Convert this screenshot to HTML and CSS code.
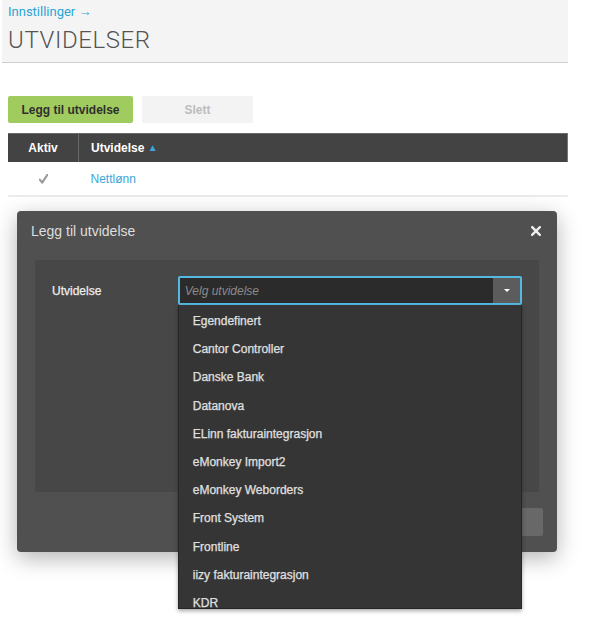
FILE: index.html
```html
<!DOCTYPE html>
<html lang="no">
<head>
  <meta charset="UTF-8">
  <meta name="viewport" content="width=device-width, initial-scale=1.0">
  <title>Utvidelser</title>
  <link rel="stylesheet" href="styles.css">
</head>
<body>

  <div class="page">
    <div class="page-header">
      <a class="crumb" href="#">Innstillinger &rarr;</a>
      <h1>UTVIDELSER</h1>
    </div>

    <div class="content">
      <div class="toolbar">
        <button class="btn btn-green">Legg til utvidelse</button>
        <button class="btn btn-disabled">Slett</button>
      </div>

      <table class="grid">
        <thead>
          <tr>
            <th class="col-active">Aktiv</th>
            <th class="col-name">Utvidelse <span class="sort">&#9650;</span></th>
          </tr>
        </thead>
        <tbody>
          <tr>
            <td class="col-active">
              <svg width="9" height="10" viewBox="0 0 9 10"><path d="M0.8 5.6 L3.2 8.6 L8.2 1" fill="none" stroke="#9a9a9a" stroke-width="2.2" stroke-linecap="round" stroke-linejoin="round"/></svg>
            </td>
            <td class="col-name"><a href="#">Nettlønn</a></td>
          </tr>
        </tbody>
      </table>
    </div>
  </div>

  <!-- dialog -->
  <div class="modal">
    <div class="modal-header">
      <span class="modal-title">Legg til utvidelse</span>
      <svg class="close" width="10" height="10" viewBox="0 0 10 10"><path d="M1.2 1.2 L8.8 8.8 M8.8 1.2 L1.2 8.8" stroke="#eeeeee" stroke-width="2.4" stroke-linecap="square"/></svg>
    </div>
    <div class="modal-body">
      <div class="panel">
        <div class="field">
          <label class="field-label">Utvidelse</label>
          <div class="select">
            <span class="placeholder">Velg utvidelse</span>
            <span class="select-arrow"><span class="caret"></span></span>
            <ul class="options">
              <li>Egendefinert</li>
              <li>Cantor Controller</li>
              <li>Danske Bank</li>
              <li>Datanova</li>
              <li>ELinn fakturaintegrasjon</li>
              <li>eMonkey Import2</li>
              <li>eMonkey Weborders</li>
              <li>Front System</li>
              <li>Frontline</li>
              <li>iizy fakturaintegrasjon</li>
              <li>KDR</li>
            </ul>
          </div>
        </div>
      </div>
    </div>
    <div class="modal-footer">
      <button class="btn btn-dark">Lagre</button>
    </div>
  </div>

</body>
</html>
```

FILE: styles.css
```css
body {
  margin: 0;
  font-family: "Liberation Sans", Arial, sans-serif;
  font-size: 12px;
  color: #333;
  background: #fff;
}
.page {
  width: 568px;
}
.page-header {
  margin-left: 2px;
  padding: 4px 6px 8px;
  background: #f4f4f4;
  border-bottom: 1px solid #cfcfcf;
}
.crumb {
  display: block;
  font-family: Roboto, sans-serif;
  font-size: 13px;
  line-height: 16px;
  color: #2aa4d5;
  text-decoration: none;
}
h1 {
  margin: 6px 0 0;
  font-family: Roboto, sans-serif;
  font-weight: 300;
  font-size: 24px;
  line-height: 28px;
  color: #555;
  letter-spacing: 0.6px;
}
.content {
  padding-left: 8px;
}
.toolbar {
  display: flex;
  gap: 9px;
  margin: 33px 0 10px;
}
.btn {
  height: 27px;
  border: none;
  border-radius: 2px;
  font-family: "Liberation Sans", Arial, sans-serif;
  font-size: 12px;
  font-weight: bold;
  padding: 0;
}
.btn-green {
  width: 125px;
  background: #a0cb5e;
  color: #2f2f2f;
}
.btn-disabled {
  width: 111px;
  background: #f3f3f3;
  color: #bdbdbd;
}
.grid {
  width: 560px;
  border-collapse: collapse;
}
.grid th {
  height: 28px;
  padding: 0;
  background: #434343;
  color: #fff;
  font-weight: bold;
  text-align: left;
  border-top: 1px solid #6a6a6a;
}
.grid th.col-active {
  border-right: 1px solid #6a6a6a;
}
.grid th:last-child {
  border-right: 1px solid #777;
}
.col-active {
  width: 70px;
  text-align: center !important;
}
.col-name {
  padding-left: 12px !important;
}
.sort {
  font-size: 10px;
  color: #3aa7d9;
  vertical-align: 1px;
}
.grid td {
  height: 33px;
  padding: 0;
  border-bottom: 2px solid #ebebeb;
}
.grid td svg {
  display: block;
  margin: 1px auto 0;
}
.grid td a {
  color: #3aa7d9;
  text-decoration: none;
}

/* dialog */
.modal {
  position: absolute;
  left: 17px;
  top: 211px;
  width: 540px;
  background: #505050;
  border-radius: 4px;
  box-shadow: 0 6px 22px rgba(0, 0, 0, 0.3);
}
.modal-header {
  height: 40px;
  display: flex;
  align-items: center;
  justify-content: space-between;
  padding: 0 16px 0 14px;
}
.modal-title {
  font-size: 14px;
  color: #dedede;
}
.close {
  margin-top: -1px;
}
.modal-body {
  padding: 9px 18px 0;
}
.panel {
  height: 232px;
  box-sizing: border-box;
  padding: 16px 17px;
  background: #474747;
}
.field {
  display: flex;
  align-items: center;
}
.field-label {
  width: 126px;
  color: #eee;
  -webkit-text-stroke: 0.25px #eee;
}
.select {
  position: relative;
  width: 345px;
  height: 29px;
  box-sizing: border-box;
  border: 2px solid #55b8e0;
  border-radius: 2px;
  background: #2b2b2b;
  display: flex;
  align-items: center;
}
.placeholder {
  flex: 1;
  padding-left: 5px;
  font-style: italic;
  color: #8a8a8a;
}
.select-arrow {
  width: 27px;
  height: 100%;
  background: #5c5c5c;
  display: flex;
  align-items: center;
  justify-content: center;
}
.caret {
  width: 0;
  height: 0;
  border-left: 3px solid transparent;
  border-right: 3px solid transparent;
  border-top: 3px solid #fff;
}
.options {
  position: absolute;
  left: -2px;
  top: 27px;
  width: 344px;
  height: 304px;
  box-sizing: border-box;
  margin: 0;
  padding: 2px 0 0;
  list-style: none;
  overflow: hidden;
  background: #353535;
  border: 1px solid #262626;
  border-top: none;
  box-shadow: 0 2px 4px rgba(0, 0, 0, 0.35);
}
.options li {
  padding: 7px 14px;
  line-height: 14.2px;
  color: #e0e0e0;
  -webkit-text-stroke: 0.25px #e0e0e0;
}
.modal-footer {
  display: flex;
  justify-content: flex-end;
  padding: 16px 14px;
}
.btn-dark {
  width: 90px;
  height: 28px;
  background: #686868;
  color: #eee;
}
```
